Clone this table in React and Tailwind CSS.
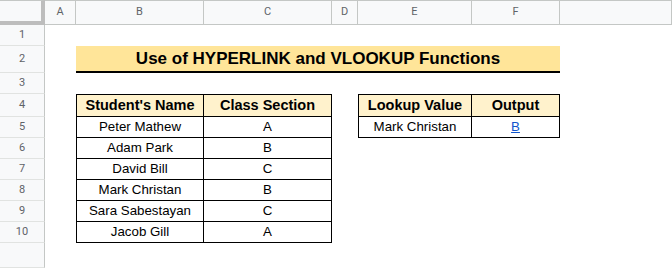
import React from 'react';

const columns = ['A', 'B', 'C', 'D', 'E', 'F', ''];
const rowNumbers = ['1', '2', '3', '4', '5', '6', '7', '8', '9', '10', ''];

const students = [
  ['Peter Mathew', 'A'],
  ['Adam Park', 'B'],
  ['David Bill', 'C'],
  ['Mark Christan', 'B'],
  ['Sara Sabestayan', 'C'],
  ['Jacob Gill', 'A'],
];

// grid row classes for sheet rows 5..10 (grid row = sheet row + 1)
const dataRows = ['row-start-6', 'row-start-7', 'row-start-8', 'row-start-9', 'row-start-10', 'row-start-11'];

const headCell = 'flex items-center justify-center bg-[#fff2cc] border-b border-r border-t border-black text-[14.5px] font-bold text-black';
const bodyCell = 'flex items-center justify-center border-b border-r border-black text-[13.3px] text-black';

export default function App() {
  return (
    <div
      className="grid h-[268px] w-[672px] overflow-hidden bg-white grid-cols-[45px_31px_128px_128px_26px_114px_88px_1fr] grid-rows-[25px_21px_27px_21px_23px_21px_21px_21px_21px_21px_21px_1fr]"
      style={{ fontFamily: '"Liberation Sans", Arial, sans-serif' }}
    >
      {/* corner */}
      <div className="col-start-1 row-start-1 border-t border-[#c4c7c5] bg-[#f8f9fa] border-r-4 border-b-4 border-r-[#bdbdbd] border-b-[#bdbdbd]" />

      {/* column headers */}
      {columns.map((c, i) => (
        <div
          key={'c' + i}
          className="row-start-1 flex items-center justify-center border-t border-b border-r border-[#c4c7c5] bg-[#f8f9fa] text-[11px] text-[#5f6368]"
          style={{ gridColumnStart: i + 2, fontFamily: 'Roboto, Arial, sans-serif' }}
        >
          {c}
        </div>
      ))}

      {/* row headers */}
      {rowNumbers.map((n, i) => (
        <div
          key={'r' + i}
          className="col-start-1 flex items-center justify-center border-b border-r border-b-[#e1e3e1] border-r-[#c4c7c5] bg-[#f8f9fa] text-[11px] text-[#5f6368]"
          style={{ gridRowStart: i + 2, fontFamily: 'Roboto, Arial, sans-serif' }}
        >
          {n}
        </div>
      ))}

      {/* title */}
      <div className="col-start-3 col-span-5 row-start-3 flex items-center justify-center bg-[#ffe599] border-b-2 border-black text-[17px] font-bold text-black">
        Use of HYPERLINK and VLOOKUP Functions
      </div>

      {/* students table */}
      <div className={`col-start-3 row-start-5 border-l ${headCell}`}>Student's Name</div>
      <div className={`col-start-4 row-start-5 ${headCell}`}>Class Section</div>
      {students.map(([name, section], i) => (
        <React.Fragment key={name}>
          <div className={`col-start-3 border-l ${dataRows[i]} ${bodyCell}`}>{name}</div>
          <div className={`col-start-4 ${dataRows[i]} ${bodyCell}`}>{section}</div>
        </React.Fragment>
      ))}

      {/* lookup table */}
      <div className={`col-start-6 row-start-5 border-l ${headCell}`}>Lookup Value</div>
      <div className={`col-start-7 row-start-5 ${headCell}`}>Output</div>
      <div className={`col-start-6 row-start-6 border-l ${bodyCell}`}>Mark Christan</div>
      <div className={`col-start-7 row-start-6 ${bodyCell}`}>
        <a href="#" className="text-[#1155cc] underline">B</a>
      </div>
    </div>
  );
}
